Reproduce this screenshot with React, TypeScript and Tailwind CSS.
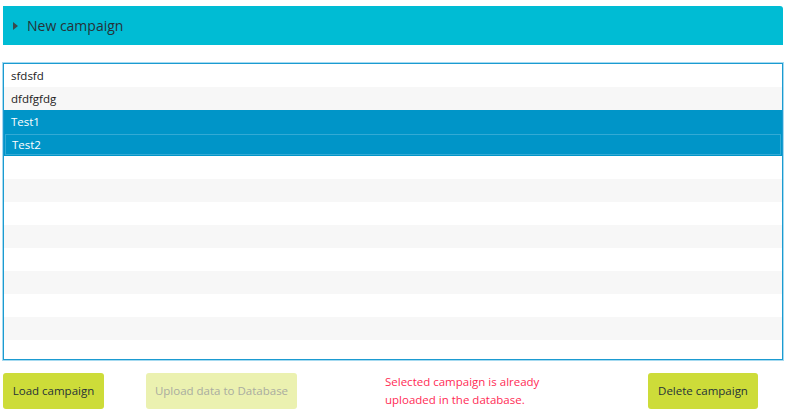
import React from "react";

const items = ["sfdsfd", "dfdfgfdg", "Test1", "Test2"];

export default function App() {
  const rows = Array.from({ length: 13 }, (_, i) => i);
  return (
    <div
      className="w-[789px] h-[418px] bg-white overflow-hidden"
      style={{ fontFamily: '"Open Sans", "Noto Sans", sans-serif' }}
    >
      <div className="pt-[6px] px-[3px] w-[786px]">
        <div className="h-[39px] bg-[#00bcd4] rounded-tr-[3px] flex items-center pl-[10px] gap-[9px]">
          <svg width="5" height="8" viewBox="0 0 5 8">
            <path d="M0 0 L5 4 L0 8 Z" fill="#3a4a4d" />
          </svg>
          <span className="text-[14px] text-[#263238] leading-none pt-px">New campaign</span>
        </div>
        <div className="mt-[18px] h-[297px] border border-[#1b9bd1] shadow-[0_0_0_1px_#a6daf0] overflow-hidden">
          {rows.map((i) => {
            const label = items[i];
            const selected = i === 2 || i === 3;
            const focused = i === 3;
            const bg = selected ? "bg-[#0095c8]" : i % 2 === 1 ? "bg-[#f7f7f7]" : "bg-white";
            return (
              <div key={i} className={`h-[23px] ${bg} ${focused ? "p-px" : ""}`}>
                <div
                  className={`h-full flex items-center ${focused ? "border border-[#33aad5] pl-[6px]" : "pl-[7px]"} text-[11.5px] ${selected ? "text-white" : "text-[#222]"}`}
                >
                  {label ?? ""}
                </div>
              </div>
            );
          })}
        </div>
        <div className="mt-[13px] flex items-center">
          <button className="h-[36px] w-[101px] rounded-[3px] bg-[#cddc39] text-[11.5px] text-[#263238]">
            Load campaign
          </button>
          <button className="ml-[42px] h-[36px] w-[151px] rounded-[3px] bg-[#ebf1b0] text-[11.5px] text-[#a9aca0]">
            Upload data to Database
          </button>
          <div className="ml-[88px] text-[11.5px] leading-[18px] text-[#ff2b55]">
            Selected campaign is already
            <br />
            uploaded in the database.
          </div>
          <button className="ml-auto mr-[25px] h-[36px] w-[110px] rounded-[3px] bg-[#cddc39] text-[11.5px] text-[#263238]">
            Delete campaign
          </button>
        </div>
      </div>
    </div>
  );
}
